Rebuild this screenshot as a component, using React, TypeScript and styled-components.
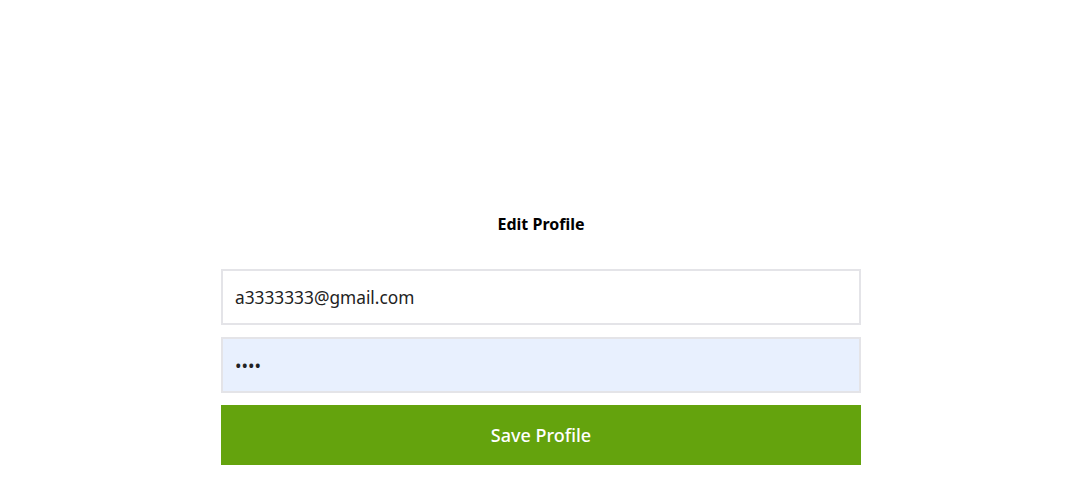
import React from "react";
import styled, { createGlobalStyle } from "styled-components";

const Global = createGlobalStyle`
  html, body { margin: 0; padding: 0; background: #fff; }
  body { font-family: "Noto Sans", "Open Sans", sans-serif; }
`;

const Page = styled.div`
  display: flex;
  justify-content: center;
  padding-top: 212px;
`;

const Form = styled.form`
  width: 640px;
  display: flex;
  flex-direction: column;
`;

const Title = styled.h1`
  margin: 0 0 33px;
  font-size: 16px;
  line-height: 24px;
  font-weight: 700;
  text-align: center;
  color: #000;
`;

const Field = styled.input<{ $filled?: boolean }>`
  box-sizing: border-box;
  width: 100%;
  height: 56px;
  margin: 0 0 12px;
  padding: 0 12px;
  border: 2px solid #e4e4e8;
  outline: none;
  background: ${(p) => (p.$filled ? "#e8f0fe" : "#fff")};
  font-family: inherit;
  font-size: 17.3px;
  color: #222;
  border-radius: 0;
`;

const SaveButton = styled.button`
  height: 60px;
  border: none;
  background: #64a30d;
  color: #fff;
  font-family: inherit;
  font-size: 18px;
  font-weight: 500;
  cursor: pointer;
  border-radius: 0;
`;

export default function App() {
  return (
    <>
      <Global />
      <Page>
        <Form onSubmit={(e) => e.preventDefault()}>
          <Title>Edit Profile</Title>
          <Field type="email" defaultValue="a3333333@gmail.com" />
          <Field type="password" defaultValue="1234" $filled />
          <SaveButton type="submit">Save Profile</SaveButton>
        </Form>
      </Page>
    </>
  );
}
